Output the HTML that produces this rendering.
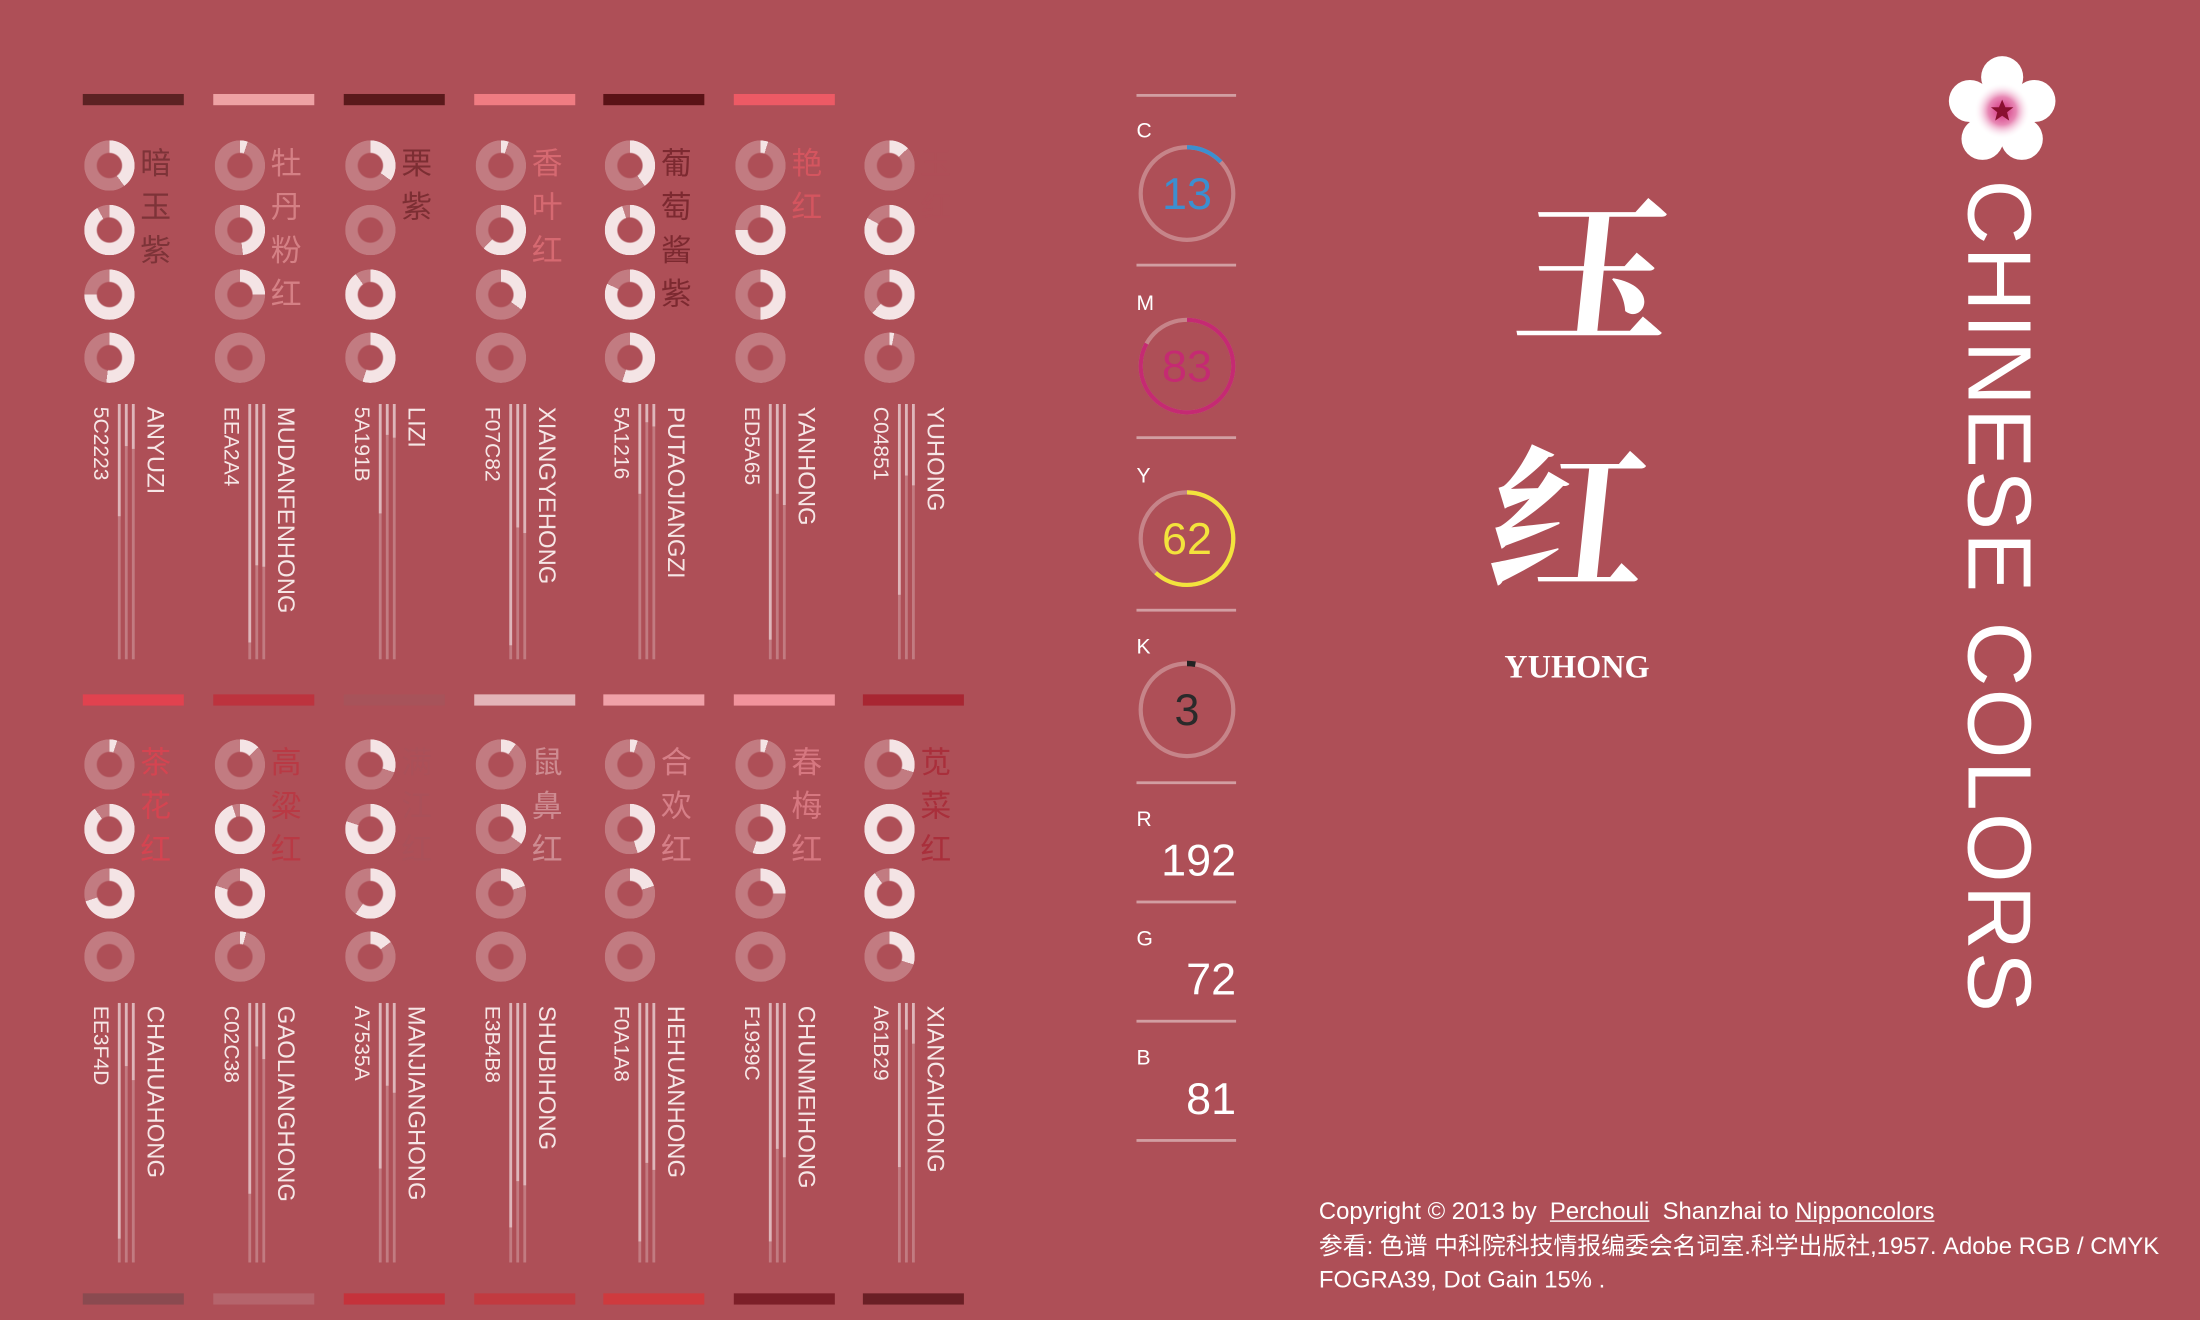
<!DOCTYPE html>
<html><head><meta charset="utf-8"><style>
html,body{margin:0;padding:0;background:#ae4f57;overflow:hidden;width:2200px;height:1320px}
#w{position:absolute;left:0;top:0;width:1568px;height:941px;transform:scale(1.40306,1.40276);transform-origin:0 0;font-family:"Liberation Sans","Noto Sans CJK SC",sans-serif}
.a{position:absolute}
.bar{position:absolute;width:72px;height:8px}
.ring{position:absolute;width:36px;height:36px;border-radius:50%;
background:conic-gradient(#f4e4e5 calc(var(--p)*1%),rgba(255,255,255,.25) 0);
-webkit-mask:radial-gradient(circle,transparent 8.5px,#000 9.5px);mask:radial-gradient(circle,transparent 8.5px,#000 9.5px)}
.zh{position:absolute;font-size:22px;line-height:31px;width:24px;font-family:"Noto Sans CJK SC",sans-serif;opacity:.6}
.vt{position:absolute;writing-mode:vertical-rl;color:#f6e6e6;white-space:nowrap}
.hex{font-size:15px}
.nm{font-size:17px}
.ln{position:absolute;width:1.5px;background:rgba(255,255,255,.25)}
.ln i{position:absolute;left:0;top:0;width:100%;background:rgba(255,255,255,.45)}
.hl{position:absolute;left:810px;width:71px;height:1.5px;background:rgba(255,255,255,.45)}
.lb{position:absolute;left:810px;color:#fff;font-size:15px}
.num{position:absolute;right:687px;color:#fff;font-size:32px;font-weight:300}
</style></head><body><div id="w">

<!-- row 1 -->
<div class="bar" style="left:59px;top:67px;background:#5c2223"></div>
<div class="bar" style="left:152px;top:67px;background:#eea2a4"></div>
<div class="bar" style="left:245px;top:67px;background:#5a191b"></div>
<div class="bar" style="left:338px;top:67px;background:#f07c82"></div>
<div class="bar" style="left:430px;top:67px;background:#5a1216"></div>
<div class="bar" style="left:523px;top:67px;background:#ed5a65"></div>

<div class="ring" style="left:60px;top:100px;--p:40"></div><div class="ring" style="left:60px;top:146px;--p:92"></div><div class="ring" style="left:60px;top:192px;--p:75"></div><div class="ring" style="left:60px;top:237px;--p:52"></div>
<div class="zh" style="left:100px;top:100px;color:#5c2223">暗<br>玉<br>紫</div>
<div class="vt hex" style="left:63px;top:290px">5C2223</div><div class="vt nm" style="left:100px;top:290px">ANYUZI</div>
<div class="ln" style="left:84px;top:288px;height:182px"><i style="height:80px"></i></div><div class="ln" style="left:89px;top:288px;height:182px"><i style="height:30px"></i></div><div class="ln" style="left:94px;top:288px;height:182px"><i style="height:32px"></i></div>

<div class="ring" style="left:153px;top:100px;--p:5"></div><div class="ring" style="left:153px;top:146px;--p:48"></div><div class="ring" style="left:153px;top:192px;--p:25"></div><div class="ring" style="left:153px;top:237px;--p:0"></div>
<div class="zh" style="left:193px;top:100px;color:#eea2a4">牡<br>丹<br>粉<br>红</div>
<div class="vt hex" style="left:156px;top:290px">EEA2A4</div><div class="vt nm" style="left:193px;top:290px">MUDANFENHONG</div>
<div class="ln" style="left:177px;top:288px;height:182px"><i style="height:170px"></i></div><div class="ln" style="left:182px;top:288px;height:182px"><i style="height:115px"></i></div><div class="ln" style="left:187px;top:288px;height:182px"><i style="height:116px"></i></div>

<div class="ring" style="left:246px;top:100px;--p:35"></div><div class="ring" style="left:246px;top:146px;--p:0"></div><div class="ring" style="left:246px;top:192px;--p:90"></div><div class="ring" style="left:246px;top:237px;--p:55"></div>
<div class="zh" style="left:286px;top:100px;color:#5a191b">栗<br>紫</div>
<div class="vt hex" style="left:249px;top:290px">5A191B</div><div class="vt nm" style="left:286px;top:290px">LIZI</div>
<div class="ln" style="left:270px;top:288px;height:182px"><i style="height:78px"></i></div><div class="ln" style="left:275px;top:288px;height:182px"><i style="height:22px"></i></div><div class="ln" style="left:280px;top:288px;height:182px"><i style="height:24px"></i></div>

<div class="ring" style="left:339px;top:100px;--p:5"></div><div class="ring" style="left:339px;top:146px;--p:62"></div><div class="ring" style="left:339px;top:192px;--p:35"></div><div class="ring" style="left:339px;top:237px;--p:0"></div>
<div class="zh" style="left:379px;top:100px;color:#f07c82">香<br>叶<br>红</div>
<div class="vt hex" style="left:342px;top:290px">F07C82</div><div class="vt nm" style="left:379px;top:290px">XIANGYEHONG</div>
<div class="ln" style="left:363px;top:288px;height:182px"><i style="height:172px"></i></div><div class="ln" style="left:368px;top:288px;height:182px"><i style="height:88px"></i></div><div class="ln" style="left:373px;top:288px;height:182px"><i style="height:92px"></i></div>

<div class="ring" style="left:431px;top:100px;--p:40"></div><div class="ring" style="left:431px;top:146px;--p:95"></div><div class="ring" style="left:431px;top:192px;--p:82"></div><div class="ring" style="left:431px;top:237px;--p:55"></div>
<div class="zh" style="left:471px;top:100px;color:#5a1216">葡<br>萄<br>酱<br>紫</div>
<div class="vt hex" style="left:434px;top:290px">5A1216</div><div class="vt nm" style="left:471px;top:290px">PUTAOJIANGZI</div>
<div class="ln" style="left:455px;top:288px;height:182px"><i style="height:64px"></i></div><div class="ln" style="left:460px;top:288px;height:182px"><i style="height:13px"></i></div><div class="ln" style="left:465px;top:288px;height:182px"><i style="height:16px"></i></div>

<div class="ring" style="left:524px;top:100px;--p:5"></div><div class="ring" style="left:524px;top:146px;--p:75"></div><div class="ring" style="left:524px;top:192px;--p:50"></div><div class="ring" style="left:524px;top:237px;--p:0"></div>
<div class="zh" style="left:564px;top:100px;color:#ed5a65">艳<br>红</div>
<div class="vt hex" style="left:527px;top:290px">ED5A65</div><div class="vt nm" style="left:564px;top:290px">YANHONG</div>
<div class="ln" style="left:548px;top:288px;height:182px"><i style="height:168px"></i></div><div class="ln" style="left:553px;top:288px;height:182px"><i style="height:64px"></i></div><div class="ln" style="left:558px;top:288px;height:182px"><i style="height:72px"></i></div>

<div class="ring" style="left:616px;top:100px;--p:13"></div><div class="ring" style="left:616px;top:146px;--p:83"></div><div class="ring" style="left:616px;top:192px;--p:62"></div><div class="ring" style="left:616px;top:237px;--p:3"></div>
<div class="zh" style="left:656px;top:100px;color:#b04f58">玉<br>红</div>
<div class="vt hex" style="left:619px;top:290px">C04851</div><div class="vt nm" style="left:656px;top:290px">YUHONG</div>
<div class="ln" style="left:640px;top:288px;height:182px"><i style="height:136px"></i></div><div class="ln" style="left:645px;top:288px;height:182px"><i style="height:51px"></i></div><div class="ln" style="left:650px;top:288px;height:182px"><i style="height:58px"></i></div>

<!-- row 2 -->
<div class="bar" style="left:59px;top:495px;background:#ee3f4d;opacity:.8"></div>
<div class="bar" style="left:152px;top:495px;background:#c02c38;opacity:.8"></div>
<div class="bar" style="left:245px;top:495px;background:#a7535a"></div>
<div class="bar" style="left:338px;top:495px;background:#e3b4b8"></div>
<div class="bar" style="left:430px;top:495px;background:#f0a1a8"></div>
<div class="bar" style="left:523px;top:495px;background:#f1939c"></div>
<div class="bar" style="left:615px;top:495px;background:#a61b29;opacity:.8"></div>

<div class="ring" style="left:60px;top:527px;--p:5"></div><div class="ring" style="left:60px;top:573px;--p:90"></div><div class="ring" style="left:60px;top:619px;--p:70"></div><div class="ring" style="left:60px;top:664px;--p:0"></div>
<div class="zh" style="left:100px;top:527px;color:#ee3f4d">茶<br>花<br>红</div>
<div class="vt hex" style="left:63px;top:717px">EE3F4D</div><div class="vt nm" style="left:100px;top:717px">CHAHUAHONG</div>
<div class="ln" style="left:84px;top:715px;height:185px"><i style="height:168px"></i></div><div class="ln" style="left:89px;top:715px;height:185px"><i style="height:45px"></i></div><div class="ln" style="left:94px;top:715px;height:185px"><i style="height:55px"></i></div>

<div class="ring" style="left:153px;top:527px;--p:13"></div><div class="ring" style="left:153px;top:573px;--p:95"></div><div class="ring" style="left:153px;top:619px;--p:80"></div><div class="ring" style="left:153px;top:664px;--p:4"></div>
<div class="zh" style="left:193px;top:527px;color:#c02c38">高<br>粱<br>红</div>
<div class="vt hex" style="left:156px;top:717px">C02C38</div><div class="vt nm" style="left:193px;top:717px">GAOLIANGHONG</div>
<div class="ln" style="left:177px;top:715px;height:185px"><i style="height:136px"></i></div><div class="ln" style="left:182px;top:715px;height:185px"><i style="height:31px"></i></div><div class="ln" style="left:187px;top:715px;height:185px"><i style="height:40px"></i></div>

<div class="ring" style="left:246px;top:527px;--p:30"></div><div class="ring" style="left:246px;top:573px;--p:80"></div><div class="ring" style="left:246px;top:619px;--p:60"></div><div class="ring" style="left:246px;top:664px;--p:15"></div>
<div class="zh" style="left:286px;top:527px;color:#a7535a">满<br>江<br>红</div>
<div class="vt hex" style="left:249px;top:717px">A7535A</div><div class="vt nm" style="left:286px;top:717px">MANJIANGHONG</div>
<div class="ln" style="left:270px;top:715px;height:185px"><i style="height:118px"></i></div><div class="ln" style="left:275px;top:715px;height:185px"><i style="height:59px"></i></div><div class="ln" style="left:280px;top:715px;height:185px"><i style="height:64px"></i></div>

<div class="ring" style="left:339px;top:527px;--p:10"></div><div class="ring" style="left:339px;top:573px;--p:35"></div><div class="ring" style="left:339px;top:619px;--p:20"></div><div class="ring" style="left:339px;top:664px;--p:0"></div>
<div class="zh" style="left:379px;top:527px;color:#e3b4b8">鼠<br>鼻<br>红</div>
<div class="vt hex" style="left:342px;top:717px">E3B4B8</div><div class="vt nm" style="left:379px;top:717px">SHUBIHONG</div>
<div class="ln" style="left:363px;top:715px;height:185px"><i style="height:160px"></i></div><div class="ln" style="left:368px;top:715px;height:185px"><i style="height:127px"></i></div><div class="ln" style="left:373px;top:715px;height:185px"><i style="height:130px"></i></div>

<div class="ring" style="left:431px;top:527px;--p:5"></div><div class="ring" style="left:431px;top:573px;--p:45"></div><div class="ring" style="left:431px;top:619px;--p:20"></div><div class="ring" style="left:431px;top:664px;--p:0"></div>
<div class="zh" style="left:471px;top:527px;color:#f0a1a8">合<br>欢<br>红</div>
<div class="vt hex" style="left:434px;top:717px">F0A1A8</div><div class="vt nm" style="left:471px;top:717px">HEHUANHONG</div>
<div class="ln" style="left:455px;top:715px;height:185px"><i style="height:170px"></i></div><div class="ln" style="left:460px;top:715px;height:185px"><i style="height:114px"></i></div><div class="ln" style="left:465px;top:715px;height:185px"><i style="height:119px"></i></div>

<div class="ring" style="left:524px;top:527px;--p:5"></div><div class="ring" style="left:524px;top:573px;--p:55"></div><div class="ring" style="left:524px;top:619px;--p:25"></div><div class="ring" style="left:524px;top:664px;--p:0"></div>
<div class="zh" style="left:564px;top:527px;color:#f1939c">春<br>梅<br>红</div>
<div class="vt hex" style="left:527px;top:717px">F1939C</div><div class="vt nm" style="left:564px;top:717px">CHUNMEIHONG</div>
<div class="ln" style="left:548px;top:715px;height:185px"><i style="height:170px"></i></div><div class="ln" style="left:553px;top:715px;height:185px"><i style="height:104px"></i></div><div class="ln" style="left:558px;top:715px;height:185px"><i style="height:110px"></i></div>

<div class="ring" style="left:616px;top:527px;--p:30"></div><div class="ring" style="left:616px;top:573px;--p:100"></div><div class="ring" style="left:616px;top:619px;--p:90"></div><div class="ring" style="left:616px;top:664px;--p:30"></div>
<div class="zh" style="left:656px;top:527px;color:#a61b29">苋<br>菜<br>红</div>
<div class="vt hex" style="left:619px;top:717px">A61B29</div><div class="vt nm" style="left:656px;top:717px">XIANCAIHONG</div>
<div class="ln" style="left:640px;top:715px;height:185px"><i style="height:117px"></i></div><div class="ln" style="left:645px;top:715px;height:185px"><i style="height:19px"></i></div><div class="ln" style="left:650px;top:715px;height:185px"><i style="height:29px"></i></div>

<!-- row 3 bars -->
<div class="bar" style="left:59px;top:922px;background:#8a4a50"></div>
<div class="bar" style="left:152px;top:922px;background:#b5646c"></div>
<div class="bar" style="left:245px;top:922px;background:#c5323b"></div>
<div class="bar" style="left:338px;top:922px;background:#c23a40"></div>
<div class="bar" style="left:430px;top:922px;background:#cf3a3e"></div>
<div class="bar" style="left:523px;top:922px;background:#7c1f28"></div>
<div class="bar" style="left:615px;top:922px;background:#6a1f25"></div>

<!-- CMYK panel -->
<div class="hl" style="top:67px"></div><div class="hl" style="top:188px"></div><div class="hl" style="top:311px"></div><div class="hl" style="top:434px"></div><div class="hl" style="top:557px"></div><div class="hl" style="top:642px"></div><div class="hl" style="top:727px"></div><div class="hl" style="top:812px"></div>
<div class="lb" style="top:85px">C</div><div class="lb" style="top:208px">M</div><div class="lb" style="top:331px">Y</div><div class="lb" style="top:453px">K</div>
<svg class="a" style="left:800px;top:95px" width="92" height="460" viewBox="0 0 92 460">
<g fill="none" stroke-width="3">
<circle cx="46" cy="43" r="33" stroke="rgba(255,255,255,.3)"/>
<circle cx="46" cy="43" r="33" stroke="#3c8fd0" stroke-dasharray="27 300" transform="rotate(-90 46 43)"/>
<circle cx="46" cy="166" r="33" stroke="rgba(255,255,255,.3)"/>
<circle cx="46" cy="166" r="33" stroke="#c52a72" stroke-dasharray="172 300" transform="rotate(-90 46 166)"/>
<circle cx="46" cy="289" r="33" stroke="rgba(255,255,255,.3)"/>
<circle cx="46" cy="289" r="33" stroke="#f3e33c" stroke-dasharray="128 300" transform="rotate(-90 46 289)"/>
<circle cx="46" cy="411" r="33" stroke="rgba(255,255,255,.3)"/>
<circle cx="46" cy="411" r="33" stroke="#222" stroke-width="4" stroke-dasharray="6 300" transform="rotate(-90 46 411)"/>
</g>
<g font-family="Liberation Sans,sans-serif" font-size="32" text-anchor="middle" font-weight="300">
<text x="46" y="54" fill="#3c8fd0">13</text>
<text x="46" y="177" fill="#c52a72">83</text>
<text x="46" y="300" fill="#f3e33c">62</text>
<text x="46" y="422" fill="#2a2a2a">3</text>
</g></svg>
<div class="lb" style="top:576px">R</div><div class="lb" style="top:661px">G</div><div class="lb" style="top:746px">B</div>
<div class="num" style="top:595px">192</div><div class="num" style="top:680px">72</div><div class="num" style="top:765px">81</div>

<!-- Title -->
<div class="a" style="left:1058px;top:100px;width:140px;text-align:center;color:#fff;font-family:'Noto Serif CJK SC',serif;font-weight:700;font-size:112px;line-height:176px;transform:skewX(-6deg)">玉<br>红</div>
<div class="a" style="left:1024px;top:463px;width:200px;text-align:center;color:#fff;font-family:'Liberation Serif',serif;font-weight:bold;font-size:23px">YUHONG</div>

<!-- Logo -->
<svg class="a" style="left:1384px;top:36px" width="86" height="86" viewBox="-43 -43 86 86">
<defs><radialGradient id="g"><stop offset="0" stop-color="#d02a7a"/><stop offset=".5" stop-color="#e889b5"/><stop offset="1" stop-color="#fff" stop-opacity="0"/></radialGradient></defs>
<g fill="#fff">
<circle cx="0" cy="-24" r="15"/><circle cx="23" cy="-7" r="15"/><circle cx="14" cy="20" r="15"/><circle cx="-14" cy="20" r="15"/><circle cx="-23" cy="-7" r="15"/><circle r="20"/></g>
<circle r="20" fill="url(#g)"/>
<path d="M0-8 2.3-2.5 8-2.5 3.5 1 5 7 0 3.5-5 7-3.5 1-8-2.5-2.3-2.5Z" fill="#8a1030"/>
</svg>
<div class="a" style="left:1388px;top:128px;writing-mode:vertical-rl;color:#fff;font-size:64px;letter-spacing:1.6px;line-height:74px;white-space:nowrap;font-weight:300">CHINESE COLORS</div>

<!-- footer -->
<div class="a" style="left:940px;top:852px;color:#fff;font-size:17px;line-height:24.5px;white-space:nowrap">Copyright © 2013 by &nbsp;<u>Perchouli</u>&nbsp; Shanzhai to <u>Nipponcolors</u><br>参看: 色谱 中科院科技情报编委会名词室.科学出版社,1957. Adobe RGB / CMYK<br>FOGRA39, Dot Gain 15% .</div>

</div></body></html>
